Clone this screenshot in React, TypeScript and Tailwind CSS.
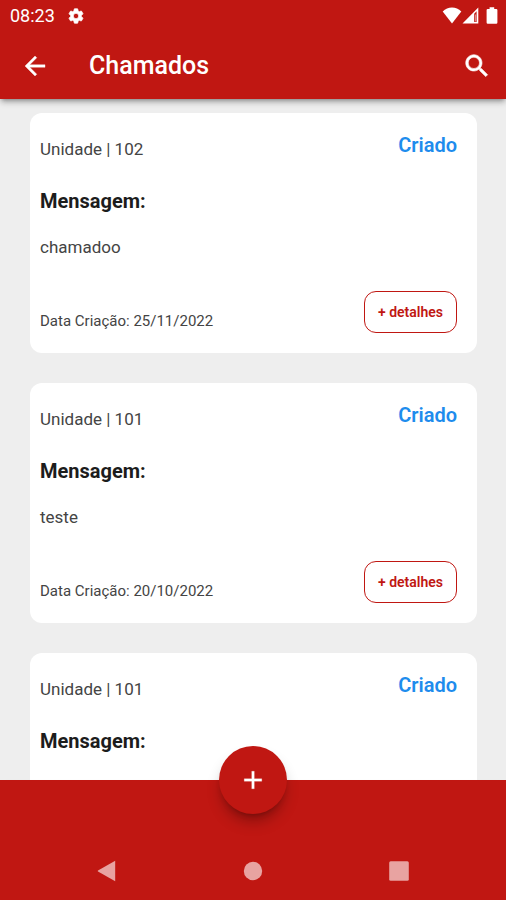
type Ticket = {
  id: string;
  unit: string;
  message: string;
  createdAt: string;
  status: string;
};

type IconProps = {
  path: string;
  className: string;
  strokeWidth?: number;
};

const TICKETS: Ticket[] = [
  {
    id: "ticket-3",
    unit: "102",
    message: "chamadoo",
    createdAt: "25/11/2022",
    status: "Criado",
  },
  {
    id: "ticket-2",
    unit: "101",
    message: "teste",
    createdAt: "20/10/2022",
    status: "Criado",
  },
  {
    id: "ticket-1",
    unit: "101",
    message: "teste",
    createdAt: "20/10/2022",
    status: "Criado",
  },
];

const ICONS = {
  settings:
    "M19.14 12.94c.04-.3.06-.61.06-.94 0-.32-.02-.64-.07-.94l2.03-1.58c.18-.14.23-.41.12-.61l-1.92-3.32c-.12-.22-.37-.29-.59-.22l-2.39.96c-.5-.38-1.03-.7-1.62-.94l-.36-2.54c-.04-.24-.24-.41-.48-.41h-3.84c-.24 0-.43.17-.47.41l-.36 2.54c-.59.24-1.13.57-1.62.94l-2.39-.96c-.22-.08-.47 0-.59.22L2.74 8.87c-.12.21-.08.47.12.61l2.03 1.58c-.05.3-.09.63-.09.94s.02.64.07.94l-2.03 1.58c-.18.14-.23.41-.12.61l1.92 3.32c.12.22.37.29.59.22l2.39-.96c.5.38 1.03.7 1.62.94l.36 2.54c.05.24.24.41.48.41h3.84c.24 0 .44-.17.47-.41l.36-2.54c.59-.24 1.13-.56 1.62-.94l2.39.96c.22.08.47 0 .59-.22l1.92-3.32c.12-.22.07-.47-.12-.61l-2.01-1.58zM12 15.6c-1.98 0-3.6-1.62-3.6-3.6s1.62-3.6 3.6-3.6 3.6 1.62 3.6 3.6-1.62 3.6-3.6 3.6z",
  back: "M20 11H7.83l5.59-5.59L12 4l-8 8 8 8 1.41-1.41L7.83 13H20v-2z",
  search:
    "M15.5 14h-.79l-.28-.27C15.41 12.59 16 11.11 16 9.5 16 5.91 13.09 3 9.5 3S3 5.91 3 9.5 5.91 16 9.5 16c1.61 0 3.09-.59 4.23-1.57l.27.28v.79l5 4.99L20.49 19l-4.99-5zm-6 0C7.01 14 5 11.99 5 9.5S7.01 5 9.5 5 14 7.01 14 9.5 11.99 14 9.5 14z",
  add: "M19 13h-6v6h-2v-6H5v-2h6V5h2v6h6v2z",
};

function Icon({ path, className, strokeWidth = 0 }: IconProps) {
  return (
    <svg
      viewBox="0 0 24 24"
      className={className}
      fill="currentColor"
      stroke="currentColor"
      strokeWidth={strokeWidth}
      aria-hidden="true"
    >
      <path d={path} />
    </svg>
  );
}

function StatusBar() {
  return (
    <div className="flex h-8 items-center pr-2 pl-[10px]">
      <span className="text-lg leading-8">08:23</span>
      <Icon
        path={ICONS.settings}
        strokeWidth={1}
        className="ml-3 size-[18px]"
      />
      <div className="ml-auto flex items-center">
        <svg viewBox="0 0 20 18" className="h-[18px] w-5" fill="currentColor">
          <path d="M10 16.4 L0.7 4.6 C3.3 2.1 6.5 0.6 10 0.6 C13.5 0.6 16.7 2.1 19.3 4.6 Z" />
        </svg>
        <svg viewBox="0 0 17 18" className="h-[18px] w-[17px]" fill="currentColor">
          <path
            fillRule="evenodd"
            d="M16.3 0.6 V16.6 H0.5 Z M12.2 6.8 V15.1 H14.6 V4.2 Z"
          />
          <path d="M13 7.4 H14 V14.6 H13 Z" opacity="0.5" />
        </svg>
        <svg
          viewBox="0 0 12 18"
          className="ml-[7px] h-[18px] w-3"
          fill="currentColor"
        >
          <path d="M3.6 0.2 H8.2 V1.9 H10.2 Q11.4 1.9 11.4 3.1 V15.5 Q11.4 16.7 10.2 16.7 H1.8 Q0.6 16.7 0.6 15.5 V3.1 Q0.6 1.9 1.8 1.9 H3.6 Z" />
        </svg>
      </div>
    </div>
  );
}

function TicketCard({ ticket }: { ticket: Ticket }) {
  return (
    <article className="flex shrink-0 justify-between rounded-xl bg-white pt-5 pr-5 pb-5 pl-[10px]">
      <div className="flex flex-col pt-1 text-[#444444]">
        <p className="text-[17px] leading-6">Unidade | {ticket.unit}</p>
        <h2 className="mt-7 text-xl leading-6 font-bold text-[#1c1c1c]">
          Mensagem:
        </h2>
        <p className="mt-[22px] text-[17px] leading-6">{ticket.message}</p>
        <p className="mt-auto text-[15px] leading-6">
          Data Criação: {ticket.createdAt}
        </p>
      </div>
      <div className="flex flex-col items-end">
        <span className="text-xl leading-6 font-semibold text-[#1e8ced]">
          {ticket.status}
        </span>
        <button
          type="button"
          className="mt-[134px] h-[42px] rounded-xl border border-[#c01712] px-[13px] text-sm font-semibold text-[#c01712]"
        >
          + detalhes
        </button>
      </div>
    </article>
  );
}

export default function App() {
  return (
    <div
      className="flex h-screen flex-col bg-[#eeeeee]"
      style={{ fontFamily: "Roboto, sans-serif" }}
    >
      <header className="z-10 bg-[#c01712] text-white shadow-md shadow-black/30">
        <StatusBar />
        <div className="flex h-[67px] items-center pr-[14px] pl-5">
          <button type="button" aria-label="Voltar">
            <Icon
              path={ICONS.back}
              strokeWidth={0.3}
              className="size-[30px]"
            />
          </button>
          <h1 className="ml-[39px] text-[25px] leading-8 font-medium">
            Chamados
          </h1>
          <button type="button" aria-label="Pesquisar" className="ml-auto">
            <Icon
              path={ICONS.search}
              strokeWidth={0.5}
              className="size-[30px]"
            />
          </button>
        </div>
      </header>

      <main className="flex min-h-0 flex-1 flex-col gap-[30px] overflow-hidden pt-[14px] pr-[29px] pl-[30px]">
        {TICKETS.map((ticket) => (
          <TicketCard key={ticket.id} ticket={ticket} />
        ))}
      </main>

      <footer className="relative z-10 flex h-[120px] shrink-0 flex-col justify-end bg-[#c01712] shadow-md">
        <button
          type="button"
          aria-label="Novo chamado"
          className="absolute -top-[34px] left-1/2 flex size-[68px] -translate-x-1/2 items-center justify-center rounded-full bg-[#c01712] text-white shadow-lg shadow-black/30"
        >
          <Icon path={ICONS.add} strokeWidth={0.2} className="size-[30px]" />
        </button>
        <nav className="flex h-[58px] items-center justify-around px-[34px] text-[#e8a3a1]">
          <button type="button" aria-label="Voltar no sistema">
            <svg viewBox="0 0 20 22" className="h-[22px] w-5" fill="currentColor">
              <path d="M18.2 0.8 V21.2 L1 11.4 Q0.4 11 1 10.6 Z" />
            </svg>
          </button>
          <button type="button" aria-label="Início">
            <svg viewBox="0 0 20 20" className="size-5" fill="currentColor">
              <circle cx="10" cy="10" r="9.2" />
            </svg>
          </button>
          <button type="button" aria-label="Aplicativos recentes">
            <svg viewBox="0 0 20 20" className="size-5" fill="currentColor">
              <rect x="0.2" y="0.2" width="19.6" height="19.6" rx="1.5" />
            </svg>
          </button>
        </nav>
      </footer>
    </div>
  );
}
